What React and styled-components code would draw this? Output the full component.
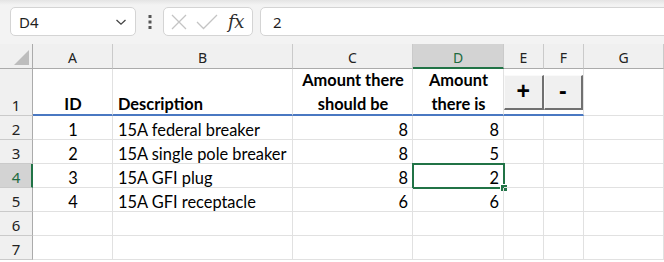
import React from "react";
import styled, { createGlobalStyle } from "styled-components";

const GlobalStyle = createGlobalStyle`
  html, body {
    margin: 0;
    padding: 0;
    background: #fff;
  }
`;

const Sheet = styled.div`
  width: 664px;
  height: 262px;
  overflow: hidden;
  display: flex;
  flex-direction: column;
  background: #fff;
`;

const FormulaBar = styled.div`
  height: 44px;
  box-sizing: border-box;
  padding: 7px 0 0 10px;
  display: flex;
  align-items: flex-start;
  background: linear-gradient(#e4e4e4 0px, #f3f3f3 5px, #f3f3f3 100%);
  font-family: "Noto Sans", "Open Sans", sans-serif;
  font-size: 15px;
  color: #1f1f1f;
`;

const Box = styled.div`
  height: 29px;
  box-sizing: border-box;
  background: #fff;
  border: 1px solid #d4d4d4;
  border-radius: 5px;
  display: flex;
  align-items: center;
`;

const NameBox = styled(Box)`
  width: 126px;
  padding: 0 8px 0 8px;
  justify-content: space-between;
`;

const Dots = styled.div`
  width: 27px;
  height: 29px;
  display: flex;
  align-items: center;
  justify-content: center;
`;

const FxBox = styled(Box)`
  width: 90px;
  padding: 0 6px 0 7px;
  gap: 9px;
`;

const Fx = styled.span`
  font-family: "DejaVu Serif", "Liberation Serif", serif;
  font-style: italic;
  font-size: 18px;
  color: #2e2e2e;
  margin-left: 1px;
  letter-spacing: -0.5px;
`;

const FormulaInput = styled(Box)`
  margin-left: 7px;
  flex: 1;
  margin-right: -20px;
  padding-left: 12px;
`;

const Grid = styled.div`
  display: grid;
  grid-template-columns: 33px 80px 180px 120px 91px 40px 40px 1fr;
  grid-template-rows: 25px 47px repeat(6, 24px);
  font-family: "Lato", "Liberation Sans", sans-serif;
  font-size: 16.4px;
  color: #000;
`;

const Corner = styled.div`
  background: #f0f0f0;
  box-sizing: border-box;
  border-right: 1px solid #ababab;
  border-bottom: 1px solid #ababab;
  display: flex;
  align-items: flex-end;
  justify-content: flex-end;
  padding: 0 3px 3px 0;
`;

const ColHeader = styled.div`
  box-sizing: border-box;
  background: ${(p) => (p.$selected ? "#d3d3d3" : "#f0f0f0")};
  color: ${(p) => (p.$selected ? "#1d6b40" : "#222")};
  border-right: 1px solid #cacaca;
  border-bottom: ${(p) => (p.$selected ? "2px solid #217346" : "1px solid #ababab")};
  font-family: "Noto Sans", "Open Sans", sans-serif;
  font-size: 14px;
  display: flex;
  align-items: center;
  justify-content: center;
  padding-top: ${(p) => (p.$selected ? "3px" : "2px")};
`;

const RowHeader = styled.div`
  box-sizing: border-box;
  background: ${(p) => (p.$selected ? "#d3d3d3" : "#f0f0f0")};
  color: ${(p) => (p.$selected ? "#1d6b40" : "#222")};
  border-right: ${(p) => (p.$selected ? "2px solid #217346" : "1px solid #ababab")};
  border-bottom: 1px solid #cacaca;
  font-family: "Noto Sans", "Open Sans", sans-serif;
  font-size: 15px;
  line-height: 20px;
  display: flex;
  align-items: flex-end;
  justify-content: center;
  padding-left: ${(p) => (p.$selected ? "1px" : "0")};
`;

const Cell = styled.div`
  position: relative;
  box-sizing: border-box;
  border-right: 1px solid #e1e1e1;
  border-bottom: ${(p) => (p.$heading ? "2px solid #4a78c2" : "1px solid #e1e1e1")};
  display: flex;
  flex-direction: column;
  justify-content: flex-end;
  align-items: ${(p) =>
    p.$align === "right" ? "flex-end" : p.$align === "center" ? "center" : "flex-start"};
  text-align: ${(p) => p.$align || "left"};
  font-weight: ${(p) => (p.$bold ? 700 : 400)};
  line-height: ${(p) => (p.$heading ? "24px" : "23px")};
  padding: 0 4px 0 5px;
  white-space: nowrap;
  grid-column: ${(p) => (p.$span ? `span ${p.$span}` : "auto")};
`;

const Text = styled.span`
  display: block;
  margin-bottom: -2px;
`;

const ButtonCell = styled(Cell)`
  flex-direction: row;
  justify-content: flex-start;
  align-items: flex-start;
  padding: 6px 0 0 0;
`;

const SheetButton = styled.button`
  width: 40px;
  height: 35px;
  box-sizing: border-box;
  margin: 0;
  padding: 0 0 1px 0;
  background: #f0f0f0;
  border-top: 1px solid #fafafa;
  border-left: 1px solid #fafafa;
  border-right: 2px solid #707070;
  border-bottom: 2px solid #707070;
  font-family: "Liberation Sans", sans-serif;
  font-weight: 700;
  font-size: 23px;
  color: #000;
  display: flex;
  align-items: center;
  justify-content: center;
`;

const Selection = styled.div`
  position: absolute;
  top: -1px;
  left: -1px;
  right: -2px;
  bottom: -2px;
  border: 2px solid #217346;
  pointer-events: none;
`;

const Handle = styled.div`
  position: absolute;
  right: -5px;
  bottom: -5px;
  width: 6px;
  height: 6px;
  background: #217346;
  border: 1px solid #fff;
`;

const cols = ["A", "B", "C", "D", "E", "F", "G"];

const items = [
  [1, "15A federal breaker", 8, 8],
  [2, "15A single pole breaker", 8, 5],
  [3, "15A GFI plug", 8, 2],
  [4, "15A GFI receptacle", 6, 6],
];

function Chevron() {
  return (
    <svg width="12" height="8" viewBox="0 0 12 8">
      <path d="M1.5 2 L6 6.2 L10.5 2" fill="none" stroke="#444" strokeWidth="1.3" />
    </svg>
  );
}

function VDots() {
  return (
    <svg width="4" height="14" viewBox="0 0 4 14">
      <rect x="0.5" y="0" width="3" height="3" fill="#555" />
      <rect x="0.5" y="5.5" width="3" height="3" fill="#555" />
      <rect x="0.5" y="11" width="3" height="3" fill="#555" />
    </svg>
  );
}

function CrossIcon() {
  return (
    <svg width="16" height="16" viewBox="0 0 16 16">
      <path d="M1 1 L15 15 M15 1 L1 15" stroke="#c4c4c4" strokeWidth="1.3" fill="none" />
    </svg>
  );
}

function CheckIcon() {
  return (
    <svg width="22" height="16" viewBox="0 0 22 16">
      <path d="M1 8 L7.5 14.5 L21 1" stroke="#c4c4c4" strokeWidth="1.3" fill="none" />
    </svg>
  );
}

function Triangle() {
  return (
    <svg width="15" height="15" viewBox="0 0 15 15">
      <polygon points="15,0 15,15 0,15" fill="#bdbdbd" />
    </svg>
  );
}

export default function App() {
  return (
    <Sheet>
      <GlobalStyle />
      <FormulaBar>
        <NameBox>
          <span>D4</span>
          <Chevron />
        </NameBox>
        <Dots>
          <VDots />
        </Dots>
        <FxBox>
          <CrossIcon />
          <CheckIcon />
          <Fx>fx</Fx>
        </FxBox>
        <FormulaInput>2</FormulaInput>
      </FormulaBar>
      <Grid>
        <Corner>
          <Triangle />
        </Corner>
        {cols.map((c) => (
          <ColHeader key={c} $selected={c === "D"}>
            {c}
          </ColHeader>
        ))}

        <RowHeader>1</RowHeader>
        <Cell $heading $bold $align="center">
          <Text>ID</Text>
        </Cell>
        <Cell $heading $bold>
          <Text>Description</Text>
        </Cell>
        <Cell $heading $bold $align="center">
          <Text>
            Amount there
            <br />
            should be
          </Text>
        </Cell>
        <Cell $heading $bold $align="center">
          <Text>
            Amount
            <br />
            there is
          </Text>
        </Cell>
        <ButtonCell $heading $span={2}>
          <SheetButton>+</SheetButton>
          <SheetButton>-</SheetButton>
        </ButtonCell>
        <Cell />

        {items.map(([id, desc, should, is], i) => {
          const rowNum = i + 2;
          const active = rowNum === 4;
          return (
            <React.Fragment key={id}>
              <RowHeader $selected={active}>{rowNum}</RowHeader>
              <Cell $align="center">
                <Text>{id}</Text>
              </Cell>
              <Cell>
                <Text>{desc}</Text>
              </Cell>
              <Cell $align="right">
                <Text>{should}</Text>
              </Cell>
              <Cell $align="right">
                <Text>{is}</Text>
                {active && (
                  <Selection>
                    <Handle />
                  </Selection>
                )}
              </Cell>
              <Cell />
              <Cell />
              <Cell />
            </React.Fragment>
          );
        })}

        {[6, 7].map((n) => (
          <React.Fragment key={n}>
            <RowHeader>{n}</RowHeader>
            {cols.map((c) => (
              <Cell key={c} />
            ))}
          </React.Fragment>
        ))}
      </Grid>
    </Sheet>
  );
}
